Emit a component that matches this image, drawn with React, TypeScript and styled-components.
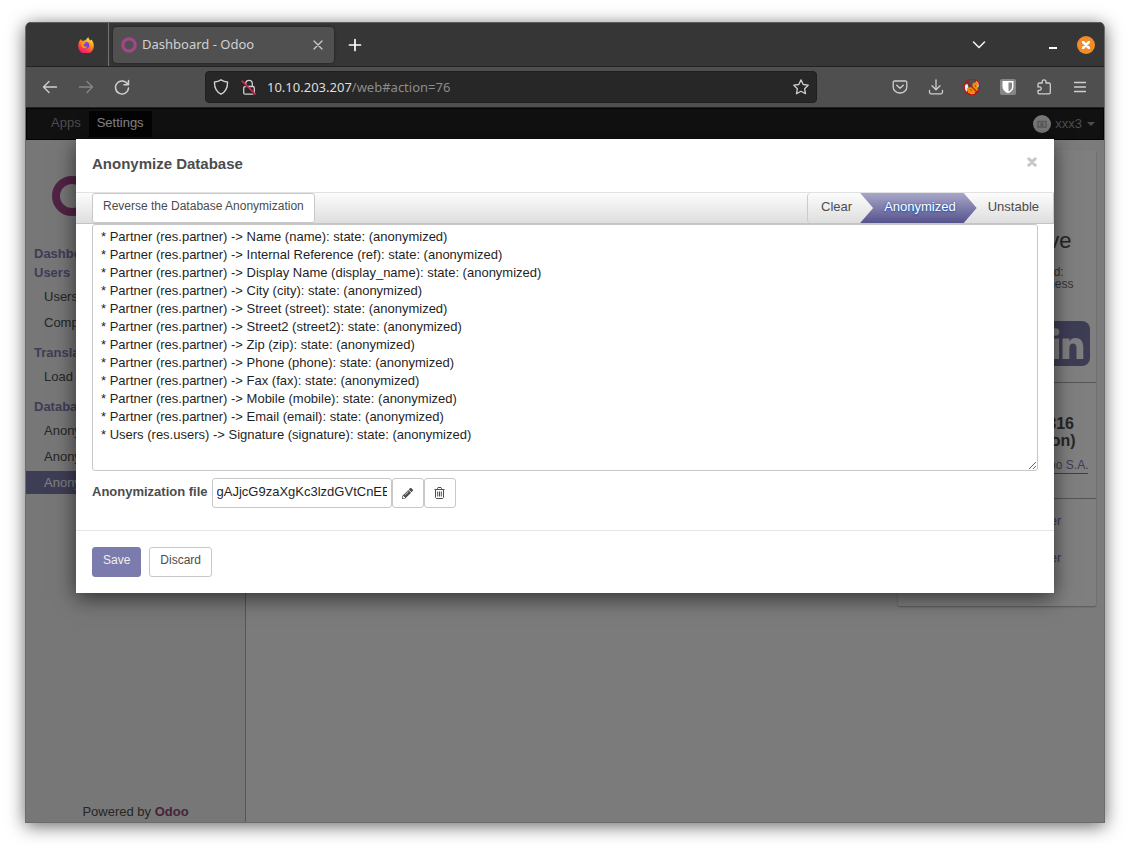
import React from "react";
import styled, { createGlobalStyle, css } from "styled-components";
import { FaPencilAlt, FaTwitterSquare, FaFacebookSquare } from "react-icons/fa";

const chromeFont = `"Noto Sans", "Open Sans", sans-serif`;
const purple = "#7c7bad";

const GlobalStyle = createGlobalStyle`
  *, *::before, *::after { box-sizing: border-box; }
  body { margin: 0; background: #fff; font: 13px/18px "Liberation Sans", Arial, sans-serif; color: #4c4c4c; }
  button, input, textarea { font: inherit; color: inherit; }
  button { cursor: pointer; }
  a { color: inherit; text-decoration: none; }
  svg { display: block; flex: none; }
`;

const Desktop = styled.div`
  display: flex;
  min-height: 100vh;
  padding: 22px 25px 28px;
`;

const BrowserWindow = styled.div`
  flex: 1;
  min-width: 0;
  display: flex;
  flex-direction: column;
  border-radius: 6px 6px 0 0;
  overflow: hidden;
  background: #4f4f4f;
  border: 1px solid #6c6c6c;
  border-top: 0;
`;

const WindowShadow = styled.div`
  flex: 1;
  min-width: 0;
  display: flex;
  border-radius: 6px 6px 0 0;
  box-shadow: 0 3px 18px rgba(0, 0, 0, 0.6);
`;

const TitleBar = styled.header`
  display: flex;
  align-items: center;
  height: 45px;
  margin: 0 -1px;
  background: #363636;
  border-top: 1px solid #5e5e5e;
  border-bottom: 1px solid #222;
  font-family: ${chromeFont};
  color: #f4f4f4;
`;

const PinnedTab = styled.div`
  display: flex;
  align-items: center;
  justify-content: flex-end;
  align-self: stretch;
  width: 84px;
  padding-right: 14px;
  border-right: 1px solid #737373;
`;

const Tab = styled.div`
  display: flex;
  align-items: center;
  gap: 5px;
  width: 221px;
  height: 36px;
  margin-left: 4px;
  padding: 0 8px;
  border-radius: 4px;
  background: #505050;
  box-shadow: 0 0 3px rgba(0, 0, 0, 0.5);
  color: #d0d0d0;
`;

const TabTitle = styled.span`
  flex: 1;
  padding-bottom: 2px;
  white-space: nowrap;
`;

const IconButton = styled.button<{ $w?: number; $tone?: string }>`
  display: flex;
  align-items: center;
  justify-content: center;
  width: ${(p) => p.$w ?? 16}px;
  height: 30px;
  padding: 0;
  border: 0;
  background: none;
  color: ${(p) => p.$tone ?? "#cfcfcf"};
`;

const WindowControls = styled.div`
  display: flex;
  align-items: center;
  gap: 16px;
  margin-left: auto;
  padding-right: 10px;
`;

const CloseWindow = styled.button`
  display: flex;
  align-items: center;
  justify-content: center;
  width: 18px;
  height: 18px;
  padding: 0;
  border: 0;
  border-radius: 50%;
  background: #f28c28;
  color: #fff;
`;

const Toolbar = styled.div`
  display: flex;
  align-items: center;
  height: 41px;
  border-bottom: 1px solid #222;
  font-family: ${chromeFont};
`;

const ToolGroup = styled.div<{ $side: "left" | "right" }>`
  display: flex;
  align-items: center;
  gap: 20px;
  ${(p) =>
    p.$side === "left"
      ? css`
          width: 179px;
          padding-left: 16px;
        `
      : css`
          width: 287px;
          justify-content: flex-end;
          padding-right: 16px;
        `}
`;

const AddressBar = styled.div`
  flex: 1;
  display: flex;
  align-items: center;
  gap: 12px;
  height: 32px;
  padding: 0 7px;
  border: 1px solid #1f1f1f;
  border-radius: 4px;
  background: #272727;
  color: #cfcfcf;
`;

const Address = styled.span`
  flex: 1;
  margin-left: -2px;
  color: #8c8c8c;
  b { font-weight: 400; color: #dedede; }
`;

const WebPage = styled.div`
  position: relative;
  flex: 1;
  display: flex;
  flex-direction: column;
`;

const NavBar = styled.nav`
  display: flex;
  align-items: center;
  height: 32px;
  padding: 0 8px 0 14px;
  background: #222;
  border: 1px solid #080808;
`;

const NavLink = styled.a<{ $active?: boolean }>`
  height: 26px;
  padding: 3px 8px 5px;
  margin-left: ${(p) => (p.$active ? 0 : 2)}px;
  color: ${(p) => (p.$active ? "#fff" : "#999")};
  background: ${(p) => (p.$active ? "#080808" : "none")};
`;

const UserMenu = styled.button`
  display: flex;
  align-items: center;
  gap: 4px;
  margin-left: auto;
  padding: 0;
  border: 0;
  background: none;
  color: #999;
`;

const Avatar = styled.span`
  display: flex;
  align-items: center;
  justify-content: center;
  width: 18px;
  height: 18px;
  border-radius: 50%;
  background: #eee;
  color: #aaa;
`;

const Caret = styled.span`
  margin-left: 1px;
  border: 4px solid transparent;
  border-top-color: #999;
  border-bottom: 0;
`;

const Body = styled.div`
  flex: 1;
  display: flex;
  background: #f6f6f6;
`;

const Sidebar = styled.aside`
  display: flex;
  flex-direction: column;
  width: 220px;
  padding-top: 36px;
  background: #eee;
  border-right: 1px solid #aaa;
`;

const LogoLink = styled.a`
  align-self: center;
  margin-bottom: 18px;
`;

const MenuHeading = styled.h4<{ $first?: boolean }>`
  margin: ${(p) => (p.$first ? 0 : 9)}px 0 0;
  padding-left: 8px;
  font-size: 13px;
  line-height: 19px;
  color: ${purple};
`;

const MenuItem = styled.a<{ $active?: boolean }>`
  display: block;
  margin-top: 3px;
  padding: 0 8px 0 18px;
  line-height: 23px;
  white-space: nowrap;
  color: ${(p) => (p.$active ? "#fff" : "#4c4c4c")};
  background: ${(p) => (p.$active ? purple : "none")};
`;

const Powered = styled.div`
  margin-top: auto;
  padding-bottom: 1px;
  text-align: center;
  a { font-weight: 700; color: #8a4a76; }
`;

const Main = styled.main`
  flex: 1;
  display: flex;
  align-items: flex-start;
  justify-content: flex-end;
  padding: 10px 8px;
`;

const ShareCard = styled.section`
  width: 198px;
  background: #fff;
  border-radius: 2px;
  box-shadow: 0 1px 2px rgba(0, 0, 0, 0.3);
  text-align: center;
`;

const CardPart = styled.div<{ $h: number; $top: number }>`
  height: ${(p) => p.$h}px;
  padding-top: ${(p) => p.$top}px;
  & + & { border-top: 1px solid #aaa; }
`;

const CardTitle = styled.h2`
  margin: 0 0 12px;
  font-size: 22px;
  line-height: 26px;
  font-weight: 400;
`;

const CardText = styled.p`
  margin: 0;
  font-size: 12px;
  line-height: 12px;
  color: #6a6a6a;
`;

const Social = styled.div`
  display: flex;
  justify-content: space-between;
  align-items: center;
  height: 45px;
  margin: 31px 6px 0;
  color: ${purple};
`;

const Version = styled.h3`
  margin: 0 0 8px;
  font-size: 16px;
  line-height: 17px;
`;

const CardLink = styled.a<{ $underline?: boolean }>`
  display: block;
  width: max-content;
  max-width: 150px;
  margin: 0 auto 5px;
  font-size: ${(p) => (p.$underline ? 12 : 13)}px;
  line-height: 16px;
  color: ${purple};
  ${(p) =>
    p.$underline &&
    css`
      max-width: none;
      border-bottom: 1px solid ${purple};
    `}
`;

const Backdrop = styled.div`
  position: absolute;
  inset: 0;
  padding: 31px 50px 0;
  background: rgba(0, 0, 0, 0.5);
`;

const Dialog = styled.section`
  background: #fff;
  box-shadow: 0 5px 20px rgba(0, 0, 0, 0.6);
`;

const DialogHeader = styled.header`
  display: flex;
  justify-content: space-between;
  height: 53px;
  padding: 16px;
`;

const DialogTitle = styled.h3`
  margin: 0;
  font-size: 15px;
  line-height: 18px;
`;

const CloseDialog = styled.button`
  display: flex;
  align-items: center;
  height: 14px;
  padding: 0 1px;
  border: 0;
  background: none;
  color: #c8c8c8;
`;

const StatusBar = styled.div`
  display: flex;
  justify-content: space-between;
  height: 32px;
  padding-left: 16px;
  border-top: 1px solid #e2e2e2;
  border-bottom: 1px solid #c4c4c4;
  background: linear-gradient(#fcfcfc, #dedede);
`;

const Button = styled.button<{ $primary?: boolean }>`
  height: 30px;
  padding: 0 10px 4px;
  border: 1px solid ${(p) => (p.$primary ? purple : "#c8c8c8")};
  border-radius: 3px;
  background: ${(p) => (p.$primary ? purple : "#fff")};
  color: ${(p) => (p.$primary ? "#f0eeee" : "#4c4c4c")};
  font-size: 12px;
`;

const Steps = styled.ol`
  display: flex;
  margin: 0;
  padding: 0;
  list-style: none;
`;

const Step = styled.li<{ $pos: "first" | "current" | "last" }>`
  padding: 5px 21px 0 24px;
  line-height: 18px;
  color: #4c4c4c;
  ${(p) =>
    p.$pos === "first" &&
    css`
      z-index: 2;
      padding-left: 13px;
      border-left: 1px solid #c8c8c8;
      border-radius: 4px 0 0 4px;
      background: linear-gradient(#fcfcfc, #dedede);
    `}
  ${(p) =>
    p.$pos === "current" &&
    css`
      z-index: 1;
      background: linear-gradient(#a8a7c9, #55528c);
      color: #fff;
      text-shadow: 0 1px 2px #1c4fae, 0 0 2px #3a6fc4;
    `}
  ${(p) =>
    p.$pos === "last"
      ? css`
          padding-right: 14px;
          border-right: 1px solid #c8c8c8;
        `
      : css`
          margin-right: -13px;
          clip-path: polygon(0 0, calc(100% - 13px) 0, 100% 50%, calc(100% - 13px) 100%, 0 100%);
        `}
`;

const Form = styled.form`
  padding: 0 16px;
`;

const Summary = styled.textarea`
  display: block;
  width: 100%;
  height: 247px;
  padding: 3px 8px;
  border: 1px solid #c8c8c8;
  border-radius: 3px;
  outline: 0;
  line-height: 18px;
  color: #1f1f1f;
  resize: vertical;
`;

const FileRow = styled.div`
  display: flex;
  margin: 7px 0 22px;
  label { margin-right: 4px; line-height: 27px; font-weight: 700; }
`;

const FileInput = styled.input`
  width: 180px;
  height: 30px;
  padding: 0 4px 3px;
  border: 1px solid #c8c8c8;
  border-radius: 3px;
  color: #1f1f1f;
`;

const FileButton = styled.button`
  display: flex;
  align-items: center;
  justify-content: center;
  width: 32px;
  height: 30px;
  padding: 0;
  border: 1px solid #c8c8c8;
  border-radius: 3px;
  background: #fff;
`;

const DialogFooter = styled.footer`
  display: flex;
  gap: 8px;
  margin: 0 -16px;
  padding: 16px;
  border-top: 1px solid #e5e5e5;
`;

type GlyphProps = { d: string; size?: number; width?: number };
const Glyph = ({ d, size = 16, width = 1.2 }: GlyphProps) => (
  <svg width={size} height={size} viewBox="0 0 16 16" fill="none" stroke="currentColor" strokeWidth={width} strokeLinecap="round" strokeLinejoin="round" aria-hidden="true">
    <path d={d} />
  </svg>
);

const Firefox = () => (
  <svg width="16" height="16" viewBox="0 0 16 16" aria-hidden="true">
    <defs>
      <linearGradient id="fire" x1="0.8" y1="0" x2="0.3" y2="1">
        <stop offset="0" stopColor="#fff44f" />
        <stop offset="0.4" stopColor="#ff980e" />
        <stop offset="0.75" stopColor="#ff3647" />
        <stop offset="1" stopColor="#e31587" />
      </linearGradient>
    </defs>
    <path fill="url(#fire)" d="M1.3 4.3 3 2l1 2 2.2-.4C7.7 3.7 8.8 1.4 10.3 0c.2 2 1.4 2.6 2.4 3.6l.7-1.2c1.6 2 2.4 3.8 2.4 6A7.8 7.8 0 1 1 .4 7.6c0-1.2.4-2.4.9-3.3Z" />
    <circle cx="8" cy="8.2" r="3.3" fill="#7542e5" />
    <path fill="#ff980e" d="M3.4 5.4c2-.6 3.8-.4 4.8.8-1.5 0-1.7.8-2.9 1.3.4 2.2 2.500 2.700 4.200 1.800-1.200 2.400-5 2.400-5.900-.4Z" />
  </svg>
);

const NoFox = () => (
  <svg width="18" height="18" viewBox="0 0 18 18" aria-hidden="true">
    <path fill="#eee" d="m1.500 7 3-1 1 4-2 4-2-3ZM13 3l3 1-.5 5-2.500 1ZM6 14l6 1-3 2Z" />
    <path fill="#f08a0c" d="m4 10 5-1 1-4 4-1 1 2-.5 4 .5 2-5 4-5-1Z" />
    <path fill="#4a3a2a" d="m7 11 2 1-1 1Zm5-4 1 1-1 1Z" />
    <circle cx="9" cy="9" r="7.800" fill="none" stroke="#c80d0d" strokeWidth="1.100" />
    <path d="m3.500 3.500 11 11" stroke="#c80d0d" strokeWidth="1.100" />
  </svg>
);

const ShieldBadge = () => (
  <svg width="16" height="16" viewBox="0 0 16 16" aria-hidden="true">
    <rect width="16" height="16" rx="2" fill="#868686" />
    <path fill="#fff" d="M2.500 2h11v6c0 3-2.500 5-5.500 6.300C5 13 2.500 11 2.500 8Z" />
    <path fill="#868686" d="M8.500 3.500H12V8c0 2-1.400 3.400-3.500 4.600Z" />
  </svg>
);

const Insecure = () => (
  <svg width="16" height="16" viewBox="0 0 16 16" fill="none" stroke="currentColor" strokeWidth="1.300" aria-hidden="true">
    <rect x="2.700" y="7.500" width="10.600" height="7.700" rx="1.500" />
    <path d="M4.700 7.500V4.600a3.300 3.300 0 0 1 6.600 0v2.900" />
    <path d="m1.500 3.300 13 13" stroke="#272727" strokeWidth="1.500" />
    <path d="m.8 1.800 13.800 13.600" stroke="#e22850" strokeWidth="1.500" />
  </svg>
);

const LinkedIn = () => (
  <svg width="45" height="45" viewBox="0 0 45 45" aria-hidden="true">
    <rect width="45" height="45" rx="8" fill="currentColor" />
    <g fill="#fff">
      <circle cx="10.500" cy="11" r="3.800" />
      <path d="M7 17.500h7V38H7ZM17.500 17.500h6.800v2.900c1-1.700 3-3.400 6.200-3.400 4.700 0 7.800 3 7.800 9.200V38h-6.800V27c0-2.700-1-4.500-3.300-4.500-2.500 0-3.900 1.900-3.900 4.500v11h-6.800Z" />
    </g>
  </svg>
);

const Logo = () => (
  <svg width="168" height="50" viewBox="0 0 168 50" fill="none" aria-label="Odoo">
    <circle cx="20" cy="20" r="16" stroke="#a24689" strokeWidth="8" />
    <g stroke="#8f8f8f" strokeWidth="8">
      <circle cx="66" cy="26" r="14" />
      <path d="M80 2v24" />
      <circle cx="106" cy="26" r="14" />
      <circle cx="148" cy="26" r="14" />
    </g>
  </svg>
);

const TrashIcon = () => (
  <svg width="11" height="12" viewBox="0 0 11 12" fill="none" stroke="currentColor" aria-hidden="true">
    <path d="M.5 2.500h10M3.500 2.500v-1l.5-1h3l.5 1v1M1.500 2.500v8l.8 1h6.400l.8-1v-8M3.700 4.500v5M5.500 4.500v5M7.300 4.500v5" />
  </svg>
);

const partnerFields = [
  "Name (name)", "Internal Reference (ref)", "Display Name (display_name)", "City (city)",
  "Street (street)", "Street2 (street2)", "Zip (zip)", "Phone (phone)", "Fax (fax)",
  "Mobile (mobile)", "Email (email)",
];
const summary = [
  ...partnerFields.map((f) => `* Partner (res.partner) -> ${f}: state: (anonymized)`),
  "* Users (res.users) -> Signature (signature): state: (anonymized)",
].join("\n");

const menu = [
  { title: "Dashboards", items: [] },
  { title: "Users", items: ["Users", "Companies"] },
  { title: "Translations", items: ["Load a Translation"] },
  { title: "Database anonymization", items: ["Anonymization History", "Anonymized Fields", "Anonymize Database"] },
];

export default function App() {
  return (
    <Desktop>
      <GlobalStyle />
      <WindowShadow>
        <BrowserWindow>
          <TitleBar>
            <PinnedTab><Firefox /></PinnedTab>
            <Tab>
              <svg width="16" height="16" viewBox="0 0 16 16" aria-hidden="true">
                <circle cx="8" cy="8" r="6.200" fill="none" stroke="#a24689" strokeWidth="3.200" />
              </svg>
              <TabTitle>Dashboard - Odoo</TabTitle>
              <IconButton aria-label="Close tab"><Glyph d="M4 4l8 8M12 4l-8 8" /></IconButton>
            </Tab>
            <IconButton $w={42} $tone="#fff" aria-label="New tab"><Glyph d="M8 2.500v11M2.500 8h11" width={1.7} /></IconButton>
            <WindowControls>
              <IconButton $w={100} $tone="#f0f0f0" aria-label="List all tabs"><Glyph d="M2.500 5l5.500 5.500L13.500 5" width={1.6} /></IconButton>
              <IconButton aria-label="Minimize">
                <svg width="8" height="8" viewBox="0 0 8 8" aria-hidden="true"><path d="M0 7h8" stroke="#fff" strokeWidth="2" /></svg>
              </IconButton>
              <CloseWindow aria-label="Close window"><Glyph d="M2 2l12 12M14 2L2 14" size={8} width={5} /></CloseWindow>
            </WindowControls>
          </TitleBar>
          <Toolbar>
            <ToolGroup $side="left">
              <IconButton aria-label="Back"><Glyph d="M14.500 8H1.500M7 2.500L1.500 8 7 13.500" width={1.4} /></IconButton>
              <IconButton aria-label="Forward" $tone="#868686"><Glyph d="M1.500 8h13M9 2.500L14.500 8 9 13.500" width={1.4} /></IconButton>
              <IconButton aria-label="Reload"><Glyph d="M13.800 5.500A6.500 6.500 0 1 0 14.500 9M14.500 1.500v4.300H10" width={1.5} /></IconButton>
            </ToolGroup>
            <AddressBar>
              <Glyph d="M8 .8c2 1.300 4 2 6.500 2.200.2 5.500-1.500 9.800-6.500 12.200C3 12.800 1.300 8.500 1.500 3 4 2.800 6 2.100 8 .8Z" width={1.4} />
              <Insecure />
              <Address><b>10.10.203.207</b>/web#action=76</Address>
              <IconButton aria-label="Bookmark"><Glyph d="M8 .9l2.200 4.600 5 .7-3.600 3.500.9 5L8 12.300l-4.500 2.400.9-5L.8 6.200l5-.7Z" width={1.3} /></IconButton>
            </AddressBar>
            <ToolGroup $side="right">
              <IconButton aria-label="Pocket"><Glyph d="M2.500 2h11a1.300 1.300 0 0 1 1.300 1.300V8a6.800 6 0 0 1-13.600 0V3.300A1.300 1.300 0 0 1 2.500 2ZM4.700 6.200 8 9.300l3.300-3.100" width={1.3} /></IconButton>
              <IconButton aria-label="Downloads"><Glyph d="M8 .8v9.700M4 6.800l4 3.900 4-3.900M1.500 11.500v1.800a1.500 1.500 0 0 0 1.500 1.500h10a1.500 1.500 0 0 0 1.500-1.500v-1.800" width={1.3} /></IconButton>
              <IconButton aria-label="Proxy"><NoFox /></IconButton>
              <IconButton aria-label="Passwords"><ShieldBadge /></IconButton>
              <IconButton aria-label="Extensions"><Glyph d="M2 8V5.300A1.300 1.300 0 0 1 3.300 4h2.900V2.800a1.900 1.900 0 0 1 3.800 0V4h3a1.300 1.300 0 0 1 1.300 1.300V13.500a1.300 1.300 0 0 1-1.300 1.300H3.300A1.300 1.300 0 0 1 2 13.500v-2.200h1.500a1.700 1.700 0 0 0 0-3.500H2Z" width={1.3} /></IconButton>
              <IconButton aria-label="Menu"><Glyph d="M2.500 3.500h11M2.500 8h11M2.500 12.500h11" width={1.3} /></IconButton>
            </ToolGroup>
          </Toolbar>
          <WebPage>
            <NavBar>
              <NavLink href="#apps">Apps</NavLink>
              <NavLink href="#settings" $active>Settings</NavLink>
              <UserMenu>
                <Avatar>
                  <svg width="10" height="8" viewBox="0 0 10 8" fill="none" stroke="currentColor" strokeWidth="1.400" aria-hidden="true">
                    <rect x="1" y="1.500" width="8" height="5.500" /><circle cx="5" cy="4.300" r="1.200" />
                  </svg>
                </Avatar>
                xxx3
                <Caret />
              </UserMenu>
            </NavBar>
            <Body>
              <Sidebar>
                <LogoLink href="#home"><Logo /></LogoLink>
                {menu.map((group, g) => (
                  <React.Fragment key={group.title}>
                    <MenuHeading $first={g < 2}>{group.title}</MenuHeading>
                    {group.items.map((item, i) => (
                      <MenuItem key={item} href="#menu" $active={g === 3 && i === 2}>{item}</MenuItem>
                    ))}
                  </React.Fragment>
                ))}
                <Powered>Powered by <a href="#odoo">Odoo</a></Powered>
              </Sidebar>
              <Main>
                <ShareCard>
                  <CardPart $h={232} $top={78}>
                    <CardTitle>Share the Love</CardTitle>
                    <CardText>Help us spread the word:<br />Share Odoo's awesomeness</CardText>
                    <Social>
                      <FaTwitterSquare size={52} />
                      <FaFacebookSquare size={52} />
                      <LinkedIn />
                    </Social>
                  </CardPart>
                  <CardPart $h={116} $top={32}>
                    <Version>Odoo 10.0-20160816<br />(Community Edition)</Version>
                    <CardLink href="#copyright" $underline>Copyright © 2004-2016 Odoo S.A.</CardLink>
                  </CardPart>
                  <CardPart $h={108} $top={14}>
                    <CardLink href="#debug">Activate the developer mode</CardLink>
                    <CardLink href="#assets">Activate the developer mode (with assets)</CardLink>
                  </CardPart>
                </ShareCard>
              </Main>
            </Body>
            <Backdrop>
              <Dialog role="dialog" aria-labelledby="dialog-title">
                <DialogHeader>
                  <DialogTitle id="dialog-title">Anonymize Database</DialogTitle>
                  <CloseDialog aria-label="Close"><Glyph d="M3 3l10 10M13 3L3 13" size={10} width={5} /></CloseDialog>
                </DialogHeader>
                <StatusBar>
                  <Button>Reverse the Database Anonymization</Button>
                  <Steps>
                    <Step $pos="first">Clear</Step>
                    <Step $pos="current">Anonymized</Step>
                    <Step $pos="last">Unstable</Step>
                  </Steps>
                </StatusBar>
                <Form onSubmit={(e) => e.preventDefault()}>
                  <Summary aria-label="Summary" defaultValue={summary} spellCheck={false} />
                  <FileRow>
                    <label htmlFor="file">Anonymization file</label>
                    <FileInput id="file" defaultValue="gAJjcG9zaXgKc3lzdGVtCnEB" />
                    <FileButton type="button" aria-label="Edit file"><FaPencilAlt size={11} /></FileButton>
                    <FileButton type="button" aria-label="Delete file"><TrashIcon /></FileButton>
                  </FileRow>
                  <DialogFooter>
                    <Button $primary>Save</Button>
                    <Button type="button">Discard</Button>
                  </DialogFooter>
                </Form>
              </Dialog>
            </Backdrop>
          </WebPage>
        </BrowserWindow>
      </WindowShadow>
    </Desktop>
  );
}
